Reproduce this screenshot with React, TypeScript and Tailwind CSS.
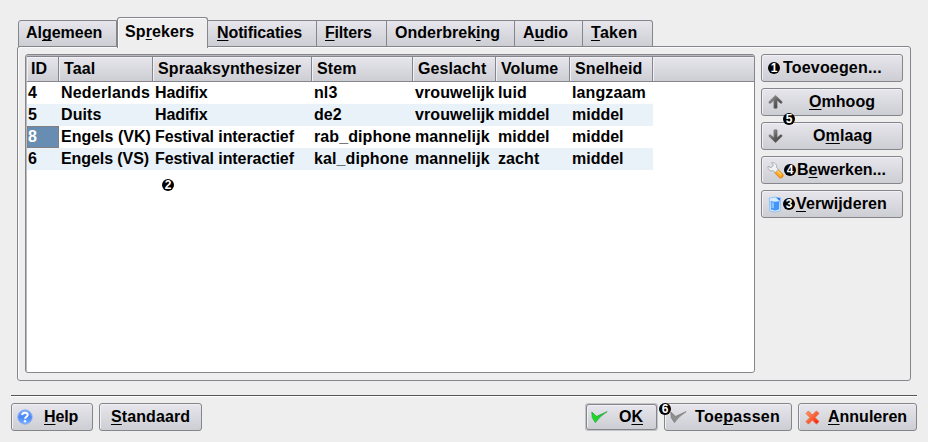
import React from "react";

type LabelProps = { text: string; hot?: number; className?: string };

/* Text with one underlined accelerator letter. */
function Label({ text, hot = -1, className = "" }: LabelProps) {
  if (hot < 0) return <span className={`whitespace-pre ${className}`}>{text}</span>;
  return (
    <span className={`whitespace-pre ${className}`}>
      {text.slice(0, hot)}
      <span className="underline decoration-[1.4px] underline-offset-[2px] [text-decoration-skip-ink:none]">{text[hot]}</span>
      {text.slice(hot + 1)}
    </span>
  );
}

function Badge({ n, className = "" }: { n: number; className?: string }) {
  return (
    <span
      className={`flex h-3 w-3 shrink-0 items-center justify-center rounded-full bg-black text-[12px] leading-3 tracking-normal text-white ${className}`}
    >
      {n}
    </span>
  );
}

const face = "bg-linear-to-b from-[#e6e6ec] to-[#cdcdd4]";

function Button({ className = "", children }: { className?: string; children: React.ReactNode }) {
  return (
    <button
      type="button"
      className={`relative flex shrink-0 items-center rounded-[3px] border border-[#85868c] ${face} ${className}`}
    >
      {children}
    </button>
  );
}

const bevel = "shadow-[inset_1px_1px_0_#f1f1f5]";

const tabs = [
  { text: "Algemeen", hot: 2, box: "w-[99px] pl-[7px] rounded-tl-[3px] border-l", track: "tracking-[-0.02px]" },
  { text: "Sprekers", hot: 2, active: true, box: "w-[91px] pl-[7px]", track: "" },
  { text: "Notificaties", hot: 0, box: "w-[109px] pl-[9px]", track: "tracking-[-0.1px]" },
  { text: "Filters", hot: 0, box: "w-[70px] pl-2", track: "tracking-[-0.18px]" },
  { text: "Onderbreking", hot: 9, box: "w-32 pl-2", track: "tracking-[0.02px]" },
  { text: "Audio", hot: 1, box: "w-[68px] pl-2", track: "tracking-[-0.1px]" },
  { text: "Taken", hot: 0, box: "w-[70px] pl-2 rounded-tr-[3px]", track: "tracking-[0.3px]" },
];

const columns = [
  { text: "ID", w: "w-8", pad: "pl-1" },
  { text: "Taal", w: "w-[94px]", pad: "pl-[5px]" },
  { text: "Spraaksynthesizer", w: "w-[159px]", pad: "pl-[5px]" },
  { text: "Stem", w: "w-[101px]", pad: "pl-[5px]" },
  { text: "Geslacht", w: "w-[83px]", pad: "pl-[5px]" },
  { text: "Volume", w: "w-[74px]", pad: "pl-[5px]" },
  { text: "Snelheid", w: "w-[83px]", pad: "pl-[5px]" },
];

const rows = [
  ["4", "Nederlands", "Hadifix", "nl3", "vrouwelijk", "luid", "langzaam"],
  ["5", "Duits", "Hadifix", "de2", "vrouwelijk", "middel", "middel"],
  ["8", "Engels (VK)", "Festival interactief", "rab_diphone", "mannelijk", "middel", "middel"],
  ["6", "Engels (VS)", "Festival interactief", "kal_diphone", "mannelijk", "zacht", "middel"],
];

/* Letter spacing for the cells whose default spacing runs wide or narrow. */
const cellTracking: Record<string, string> = {
  Nederlands: "tracking-[0.2px]",
  "Engels (VK)": "tracking-[0px]",
  "Engels (VS)": "tracking-[-0.08px]",
  Hadifix: "tracking-[-0.1px]",
  "Festival interactief": "tracking-[-0.08px]",
  middel: "tracking-[0px]",
};

function Arrow({ down = false }: { down?: boolean }) {
  const id = down ? "arrow-down" : "arrow-up";
  return (
    <svg className="h-4 w-4 shrink-0" viewBox="0 0 16 16">
      <defs>
        <linearGradient id={id} x1="0" y1={down ? "1" : "0"} x2="1" y2={down ? "0" : "1"}>
          <stop offset="0" stopColor="#aaa" />
          <stop offset=".5" stopColor="#606060" />
          <stop offset="1" stopColor="#3a3a3a" />
        </linearGradient>
      </defs>
      <path
        transform={down ? "matrix(1 0 0 -1 0 16)" : undefined}
        d="M7.5 1.3 14.2 7.8Q14.4 9.9 12.4 9.2L9.2 6.6V14Q7.5 15 5.8 14V6.6L2.6 9.2Q.6 9.9 .8 7.8Z"
        fill={`url(#${id})`}
        stroke="#777"
        strokeWidth=".4"
        strokeLinejoin="round"
      />
    </svg>
  );
}

function Wrench() {
  return (
    <svg className="h-[17px] w-[17px] shrink-0" viewBox="0 0 17 17">
      <path d="m10 9.6 3.8 4" stroke="#e58a1c" strokeWidth="5.4" strokeLinecap="round" />
      <path d="m10 9.4 3.5 3.6" stroke="#ffae26" strokeWidth="3.6" strokeLinecap="round" />
      <path d="m10.3 8.6 3.2 3.2" stroke="#ffdc85" strokeWidth="1.1" strokeLinecap="round" />
      <path
        d="M4.6.8 6.4 3.2 4.4 5.6 1 4.4C.6 7.8 3.4 9.6 6.2 8.6l2 2L11.4 7.2 9.6 5.4C10.2 2.4 7.6 .2 4.6.8Z"
        fill="#f0f2f5"
        stroke="#a2a7ae"
        strokeWidth=".9"
      />
    </svg>
  );
}

function Bin() {
  return (
    <svg className="h-[17px] w-[14px] shrink-0" viewBox="0 0 14 17">
      <path d="M1.3 2 1.8 15q5.2 2 10.4 0L12.7 2Q7 .2 1.3 2Z" fill="#d8ebff" stroke="#8fbef5" strokeWidth=".9" />
      <path d="M2.6 5Q7 6.4 11.4 5L11 13.6q-4 1.6-8 0Z" fill="#4396f8" />
      <path d="M3.4 6.2 6 6.6v5.6L3.6 12Z" fill="#8ac3ff" />
      <path d="M8 1.6 12.2 2.2 11.8 5Z" fill="#1d76f0" />
    </svg>
  );
}

function Check({ green = false }: { green?: boolean }) {
  const id = green ? "check-green" : "check-grey";
  return (
    <svg className="h-4 w-[17px] shrink-0" viewBox="0 0 17 16">
      <defs>
        <linearGradient id={id} x1="0" y1="0" x2="1" y2="0">
          <stop offset="0" stopColor={green ? "#17e423" : "#8f8f8f"} />
          <stop offset="1" stopColor={green ? "#19b62a" : "#8b8b8b"} />
        </linearGradient>
      </defs>
      <path
        d="M.8 3 1.2 8.6 4.4 13.6Q8.6 7.4 16.2 2.6L5.6 7.4Z"
        fill={`url(#${id})`}
        stroke={green ? "#27a238" : "#777"}
        strokeWidth=".7"
        strokeLinejoin="round"
      />
    </svg>
  );
}

function HelpMark() {
  return (
    <svg className="h-4 w-4 shrink-0" viewBox="0 0 16 16">
      <defs>
        <linearGradient id="help" x1="0" y1="0" x2="0" y2="1">
          <stop offset="0" stopColor="#86aefb" />
          <stop offset=".5" stopColor="#4a86f6" />
          <stop offset="1" stopColor="#7ab4ff" />
        </linearGradient>
      </defs>
      <circle cx="8" cy="8" r="7.2" fill="url(#help)" stroke="#7fa8f2" strokeWidth=".8" />
      <path d="M5.2 6C5.4 2.9 10.9 2.9 10.7 6 10.6 7.8 8.1 7.8 8.1 9.8" fill="none" stroke="#fff" strokeWidth="2" />
      <circle cx="8" cy="12.2" r="1.2" fill="#fff" />
    </svg>
  );
}

function Cross() {
  return (
    <svg className="h-[15px] w-[15px] shrink-0" viewBox="0 0 15 15">
      <defs>
        <linearGradient id="cross" x1="0" y1="0" x2="1" y2="1">
          <stop offset="0" stopColor="#ffa26a" />
          <stop offset=".5" stopColor="#fb6236" />
          <stop offset="1" stopColor="#f80c00" />
        </linearGradient>
      </defs>
      <path
        d="M3.4 1 7.4 5 11.4 1 14 3.4 10 7.5l4 4-2.6 2.6-4-4-4 4L1 11.5l4-4-4-4Z"
        fill="url(#cross)"
        stroke="#e8613c"
        strokeWidth=".8"
        strokeLinejoin="round"
      />
    </svg>
  );
}

export default function App() {
  return (
    <div className="flex h-[442px] w-[928px] flex-col overflow-hidden bg-[#eeeeee] pt-[17px] font-['Liberation_Sans',Arial,sans-serif] text-[16px] leading-5 font-bold tracking-[0.1px] text-black">
      <div className="relative z-10 ml-[18px] flex h-[30px] shrink-0 items-end">
        {tabs.map((t) =>
          t.active ? (
            <div
              key={t.text}
              className={`-mb-px flex h-[31px] items-start rounded-t-[3px] border border-b-0 border-[#85868c] bg-[#eeeeee] pt-1 shadow-[inset_1px_1px_0_#fafafa] ${t.box}`}
            >
              <Label text={t.text} hot={t.hot} className={t.track} />
            </div>
          ) : (
            <div key={t.text} className={`flex h-[27px] items-start border-y border-r border-[#85868c] pt-[2px] ${face} ${t.box}`}>
              <Label text={t.text} hot={t.hot} className={t.track} />
            </div>
          ),
        )}
      </div>

      <div className="-mt-px ml-[17px] flex h-[335px] w-[894px] shrink-0 gap-[6px] rounded-[3px] border border-[#85868c] pt-[7px] pl-[7px] shadow-[inset_1px_1px_0_#fafafa]">
        <div className="relative h-[319px] w-[730px] shrink-0 overflow-hidden rounded-[3px] border border-[#85868c] bg-white pl-px shadow-[inset_1px_1px_0_#b9babf]">
          <div className="pt-px">
            <div className={`flex h-[26px] border-t border-b border-[#85868c] ${face}`}>
              {columns.map((c) => (
                <div
                  key={c.text}
                  className={`flex shrink-0 items-center border-r border-r-[#85868c] ${bevel} ${c.w} ${c.pad}`}
                >
                  <Label text={c.text} />
                </div>
              ))}
              <div className={`flex-1 ${bevel}`} />
            </div>
          </div>
          {rows.map((r, i) => (
            <div key={r[0]} className={`flex h-[22px] w-[626px] ${i % 2 ? "bg-[#eaf2f9]" : "bg-white"}`}>
              {r.map((cell, j) => (
                <div
                  key={j}
                  className={`flex shrink-0 items-center ${columns[j].w} ${
                    i === 2 && j === 0
                      ? "border border-dotted border-[#9a7451] bg-[#678db2] text-white"
                      : j === 0
                        ? "pl-px"
                        : "pl-[2px]"
                  }`}
                >
                  <Label text={cell} className={cellTracking[cell] ?? ""} />
                </div>
              ))}
            </div>
          ))}
          <Badge n={2} className="absolute top-[124px] left-[136px]" />
        </div>

        <div className="relative flex w-[142px] flex-col gap-[6px]">
          <Button className={`h-7 w-full pl-[6px] ${bevel}`}>
            <Badge n={1} />
            <Label text="Toevoegen..." className="pl-[3px] tracking-[0.18px]" />
          </Button>
          <Button className={`h-7 w-full pl-[6px] ${bevel}`}>
            <Arrow />
            <Label text="Omhoog" hot={0} className="pl-[25px] tracking-[0.05px]" />
          </Button>
          <Button className={`h-7 w-full pl-[6px] ${bevel}`}>
            <Arrow down />
            <Label text="Omlaag" hot={1} className="pl-[29px]" />
          </Button>
          <Button className={`h-7 w-full pl-[5px] ${bevel}`}>
            <Wrench />
            <Badge n={4} />
            <Label text="Bewerken..." hot={1} className="pl-px tracking-[0px]" />
          </Button>
          <Button className={`h-7 w-full pl-[6px] ${bevel}`}>
            <Bin />
            <Badge n={3} className="ml-[1px]" />
            <Label text="Verwijderen" hot={0} className="pl-px" />
          </Button>
          <Badge n={5} className="absolute top-[59px] left-[22px]" />
        </div>
      </div>

      <div className="mt-[14px] ml-[11px] h-[2px] w-[906px] shrink-0 border-t border-[#55565a] bg-white" />

      <div className="mt-[6px] ml-[11px] flex w-[906px] shrink-0">
        <Button className={`h-7 w-[82px] pl-[5px] ${bevel}`}>
          <HelpMark />
          <Label text="Help" hot={0} className="pl-[11px] tracking-[-0.1px]" />
        </Button>
        <Button className={`ml-[6px] h-7 w-[103px] pl-[11px] ${bevel}`}>
          <Label text="Standaard" hot={0} />
        </Button>
        <div className="ml-auto h-7 w-[73px] rounded-[3px] bg-[#c3c4c9] p-px">
          <Button className={`h-[26px] w-full pl-[4px] ${bevel}`}>
            <Check green />
            <Label text="OK" hot={1} className="pl-[11px] tracking-[0px]" />
          </Button>
        </div>
        <Button className={`ml-[6px] h-7 w-32 pl-[5px] ${bevel}`}>
          <Check />
          <Label text="Toepassen" hot={3} className="pl-[8px] tracking-[0.3px]" />
          <Badge n={6} className="absolute -top-[1px] -left-[6px]" />
        </Button>
        <Button className={`ml-[6px] h-7 w-[119px] pl-[6px] ${bevel}`}>
          <Cross />
          <Label text="Annuleren" hot={0} className="pl-[8px] tracking-[0px]" />
        </Button>
      </div>
    </div>
  );
}
